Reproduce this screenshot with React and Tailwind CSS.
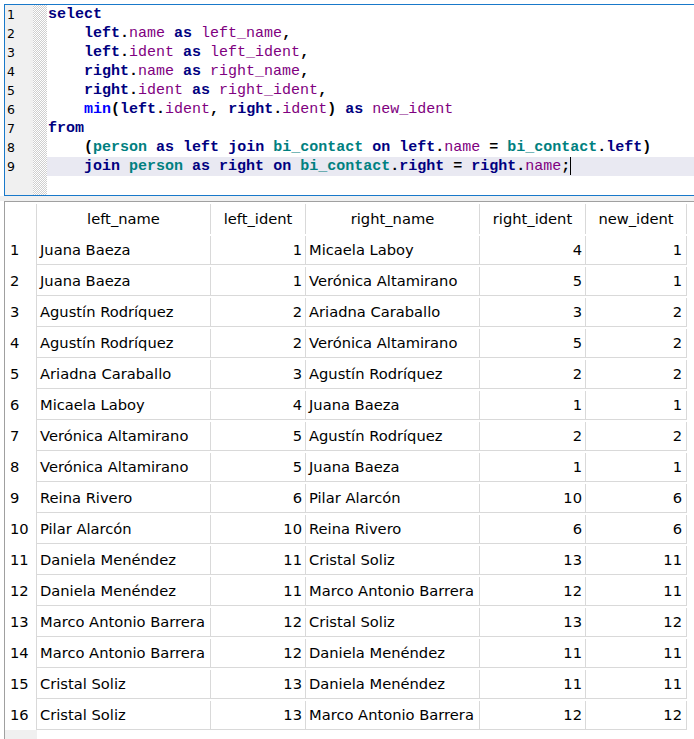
import React from "react";

const K = ({ children }) => <span className="text-[#000080] font-bold">{children}</span>;
const P = ({ children }) => <span className="text-[#800080]">{children}</span>;
const T = ({ children }) => <span className="text-[#008080] font-bold">{children}</span>;
const B = ({ children }) => <span className="text-[#0000ff] font-bold">{children}</span>;
const X = ({ children }) => <span className="text-black font-bold">{children}</span>;

const lines = [
  <><K>select</K></>,
  <>{"    "}<K>left</K><X>.</X><P>name</P> <K>as</K> <P>left_name</P><X>,</X></>,
  <>{"    "}<K>left</K><X>.</X><P>ident</P> <K>as</K> <P>left_ident</P><X>,</X></>,
  <>{"    "}<K>right</K><X>.</X><P>name</P> <K>as</K> <P>right_name</P><X>,</X></>,
  <>{"    "}<K>right</K><X>.</X><P>ident</P> <K>as</K> <P>right_ident</P><X>,</X></>,
  <>{"    "}<B>min</B><X>(</X><K>left</K><X>.</X><P>ident</P><X>,</X> <K>right</K><X>.</X><P>ident</P><X>)</X> <K>as</K> <P>new_ident</P></>,
  <><K>from</K></>,
  <>{"    "}<X>(</X><T>person</T> <K>as</K> <K>left</K> <K>join</K> <T>bi_contact</T> <K>on</K> <K>left</K><X>.</X><P>name</P> <X>=</X> <T>bi_contact</T><X>.</X><K>left</K><X>)</X></>,
  <>{"    "}<K>join</K> <T>person</T> <K>as</K> <K>right</K> <K>on</K> <T>bi_contact</T><X>.</X><K>right</K> <X>=</X> <K>right</K><X>.</X><P>name</P><X>;</X><span className="inline-block w-px h-[18px] bg-black align-top" /></>,
];

const rows = [
  ["Juana Baeza", 1, "Micaela Laboy", 4, 1],
  ["Juana Baeza", 1, "Verónica Altamirano", 5, 1],
  ["Agustín Rodríquez", 2, "Ariadna Caraballo", 3, 2],
  ["Agustín Rodríquez", 2, "Verónica Altamirano", 5, 2],
  ["Ariadna Caraballo", 3, "Agustín Rodríquez", 2, 2],
  ["Micaela Laboy", 4, "Juana Baeza", 1, 1],
  ["Verónica Altamirano", 5, "Agustín Rodríquez", 2, 2],
  ["Verónica Altamirano", 5, "Juana Baeza", 1, 1],
  ["Reina Rivero", 6, "Pilar Alarcón", 10, 6],
  ["Pilar Alarcón", 10, "Reina Rivero", 6, 6],
  ["Daniela Menéndez", 11, "Cristal Soliz", 13, 11],
  ["Daniela Menéndez", 11, "Marco Antonio Barrera", 12, 11],
  ["Marco Antonio Barrera", 12, "Cristal Soliz", 13, 12],
  ["Marco Antonio Barrera", 12, "Daniela Menéndez", 11, 11],
  ["Cristal Soliz", 13, "Daniela Menéndez", 11, 11],
  ["Cristal Soliz", 13, "Marco Antonio Barrera", 12, 12],
];

export default function App() {
  return (
    <div className="w-[694px] h-[739px] overflow-hidden bg-white">
      <div className="pl-[4px] pt-[4px]">
        <div className="w-[700px] h-[192px] border-l border-t border-b border-[#1979ca] flex">
          <div className="w-[28px] h-full bg-[#f0f0f0] text-[12.5px] text-black [font-family:'DejaVu_Sans',sans-serif]">
            {lines.map((_, i) => (
              <div key={i} className="h-[19px] leading-[19px] pl-[2px]">{i + 1}</div>
            ))}
          </div>
          <div className="w-[14px] h-full bg-[repeating-conic-gradient(#cfcfcf_0_25%,#ffffff_0_50%)] bg-[length:2px_2px]" />
          <div className="flex-1 [font-family:'Liberation_Mono',monospace] text-[15px] whitespace-pre">
            {lines.map((l, i) => (
              <div
                key={i}
                className={"h-[19px] leading-[19px] pl-[1px] " + (i === 8 ? "bg-[#e9e9f2]" : "")}
              >
                {l}
              </div>
            ))}
          </div>
        </div>
      </div>
      <div className="h-[5px] bg-[#f0f0f0]" />
      <div className="pl-[4px]">
        <div className="border-t border-l border-[#a0a0a0] [font-family:'DejaVu_Sans',sans-serif] text-[14.7px] text-black">
          <div className="flex h-[32px] pt-[2px] leading-[30px]">
            <div className="w-[32px] border-r border-[#d9d9d9]" />
            <div className="w-[174px] border-r border-[#d9d9d9] text-center">left_name</div>
            <div className="w-[95px] border-r border-[#d9d9d9] text-center">left_ident</div>
            <div className="w-[174px] border-r border-[#d9d9d9] text-center">right_name</div>
            <div className="w-[106px] border-r border-[#d9d9d9] text-center">right_ident</div>
            <div className="w-[101px] border-r border-[#d9d9d9] text-center">new_ident</div>
          </div>
          {rows.map((r, i) => (
            <div key={i} className="flex h-[31px]">
              <div className="w-[32px] border-r border-[#d9d9d9] pl-[5px] pt-[2px] leading-[28px]">{i + 1}</div>
              <div className="flex border-b border-[#d9d9d9] pt-[2px] leading-[28px]">
                <div className="w-[174px] border-r border-[#d9d9d9] pl-[3px] whitespace-nowrap">{r[0]}</div>
                <div className="w-[95px] border-r border-[#d9d9d9] pr-[3px] text-right">{r[1]}</div>
                <div className="w-[174px] border-r border-[#d9d9d9] pl-[3px] whitespace-nowrap">{r[2]}</div>
                <div className="w-[106px] border-r border-[#d9d9d9] pr-[3px] text-right">{r[3]}</div>
                <div className="w-[101px] border-r border-[#d9d9d9] pr-[4px] text-right">{r[4]}</div>
              </div>
            </div>
          ))}
          <div className="flex h-[20px]">
            <div className="w-[32px] bg-[#f0f0f0]" />
          </div>
        </div>
      </div>
    </div>
  );
}
